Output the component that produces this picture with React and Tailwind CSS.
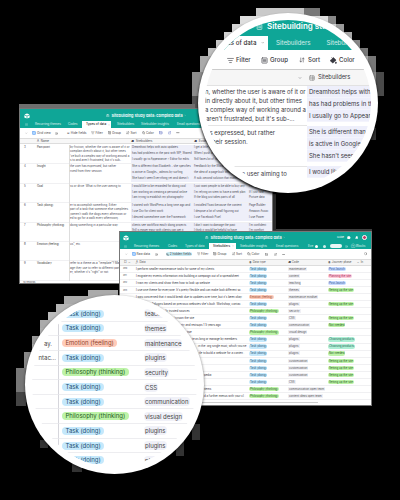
import React from "react";
import {
  ArrowDownUp, Bell, ChevronDown, ClipboardList, ExternalLink, EyeOff, Grid2x2, HelpCircle,
  ListFilter, Menu, MoreHorizontal, PaintBucket, Rows3, Search, SquareMenu, TableProperties,
} from "lucide-react";

const HALO_TOP = [
  [256, 8, 48, 8, "#c9c9c9"], [304, 8, 16, 8, "#777"],
  [240, 16, 88, 8, "#dedede"], [328, 16, 8, 8, "#888"],
  [232, 24, 104, 8, "#d4d4d4"], [336, 24, 8, 8, "#999"],
  [224, 32, 120, 8, "#d0d0d0"], [344, 32, 8, 8, "#aaa"],
  [216, 40, 136, 8, "#c5c5c5"], [352, 40, 8, 8, "#888"],
  [208, 48, 152, 8, "#bebebe"], [360, 48, 8, 8, "#777"],
  [200, 56, 168, 16, "#aaa"], [368, 56, 8, 16, "#777"],
  [192, 72, 184, 24, "#8c8c8c"], [376, 72, 8, 24, "#4a4a4a"],
  [192, 96, 184, 13, "#555"], [360, 128, 16, 12, "#333"], [352, 152, 8, 8, "#303030"],
  [19, 104, 176, 4, "#6e6e6e"], [272, 229, 100, 3, "#3c3c3c"], [273, 194, 3, 36, "#2a2a2a"],
];
const HALO_BOTTOM = [
  [88, 290, 30, 10, "#aaa"], [64, 296, 64, 8, "#aaa"], [56, 304, 70, 8, "#b5b5b5"],
  [48, 312, 60, 8, "#bbb"], [40, 320, 40, 8, "#aaa"], [40, 328, 30, 8, "#b0b0b0"],
  [32, 336, 30, 8, "#999"], [32, 344, 20, 8, "#aaa"], [24, 352, 20, 16, "#888"],
  [16, 368, 16, 24, "#777"], [16, 392, 10, 14, "#444"], [40, 440, 8, 8, "#333"],
  [72, 464, 10, 8, "#333"], [192, 424, 8, 16, "#333"], [176, 440, 8, 16, "#333"],
];

function Halo({ blocks }) {
  return (
    <svg className="absolute inset-0" width="400" height="500" shapeRendering="crispEdges" aria-hidden="true">
      {blocks.map(([x, y, w, h, fill], i) => <rect key={i} x={x} y={y} width={w} height={h} fill={fill} />)}
    </svg>
  );
}

function Logo() {
  return (
    <svg className="size-[6px]" viewBox="0 0 12 12" fill="#fff">
      <path d="M1 3.2 6 1l5 2.2L6 5.4zM.7 4.4l4.6 2v4.4L.7 8.8zM6.7 6.4l4.6-2v4.4l-4.6 2z" />
    </svg>
  );
}

function Pill({ children, tone }) {
  const tones = {
    blue: "bg-[#c5e8fb] text-[#1c4f70]",
    green: "bg-[#bdf3a8] text-[#245a20]",
    red: "bg-[#ffcbb9] text-[#8f4630]",
    pink: "bg-[#ffc9d8] text-[#9b2450]",
    indigo: "bg-[#c8dcff] text-[#28508f]",
    teal: "bg-[#aeeed5] text-[#1d6552]",
  };
  return <span className={"rounded-full " + tones[tone]}>{children}</span>;
}

const typeTone = (t) => (t[0] === "T" ? "blue" : t[0] === "E" ? "red" : "green");

/* ---------- "Types of data" window ---------- */

const typeRows = [
  [3, "Pain point", ["by friction, whether the user is aware of it or", "complain directly about it, but other times", "'ve built a complex way of working around a", "s to and aren't frustrated, but it's sub-..."],
    ["Dreamhost helps with auto updates", "has had problems in the past with WP, Shared", "I usually go to Appearance > Editor for edits"],
    ["I get a little nervous when I update", "When I push an update it will break", "Still faces lot of issues and themes"], ["She wants", "I would", "It would"]],
  [4, "Insight", ["the user has expressed, but rather", "rived from their session."],
    ["She is different than Elizabeth - she specifies", "is active in Google+, admins by surfing", "She hasn't seen Everything yet and doesn't"],
    ["Feedback by the WordPress repo", "the idea of a page built with blocks", "A sub-second solution that makes"], ["She used", "I have", "People"]],
  [5, "Goal", ["ss or drive. What is the user aiming to"],
    ["I would like to be rewarded for doing cool", "I am working on creating a personal online", "I am trying to establish my photography"],
    ["I just want people to be able to buy any", "I'm relying on stem to have a week plan", "If the blog just takes parts of all"], ["Pay", "If I just had", "Picture data"]],
  [6, "Task (doing)", ["er to accomplish something. Either", "part of a task that someone else completes.", "(weren't walk the dogs every afternoon or", "ed to go for a walk every afternoon)."],
    ["I started with WordPress a long time ago and", "I use Divi for client work", "I desired somewhere over the Framework"],
    ["I installed Yoast because the content", "I despise a lot of small figuring out", "I use Facebook Pixel"], ["Page Builder", "Amazon Assoc", "I use Power"]],
  [7, "Philosophy (thinking)", ["doing something in a particular way."],
    ["clients see workflow easily doing projects", "Still is easier easy with clients can get it"],
    ["I don't want to damage the past", "I think it would be helpful to have"], ["I'm confident", "I'm comfort"]],
  [8, "Emotion (feeling)", ["us\", etc."], [], [], []],
  [9, "Vocabulary", ["refer to a theme as a \"template\"? Make", "age they use to refer to different particu-", "er, whether it's \"right\" or not."], [], [], []],
];

function MiniLines({ lines }) {
  return (
    <div className="flex h-[18px] min-w-0 flex-col overflow-hidden bg-[#eeeff9] pl-px">
      {lines.map((l) => <div key={l} className="h-[5.8px] whitespace-nowrap leading-[5.8px]">{l}</div>)}
    </div>
  );
}

function TypesWindow() {
  return (
    <section className="absolute left-[20px] top-[109px] flex h-[174px] w-[252px] flex-col overflow-hidden bg-white text-[2.75px] text-[#4b4b55] shadow-[0_0_0_1px_#777]">
      <header className="h-[19px] bg-[#0fa697] text-white">
        <div className="flex h-[12px] items-center whitespace-nowrap pl-[4px] pt-px">
          <Logo />
          <ClipboardList className="ml-[76px] size-[3.5px]" />
          <b className="ml-[2px] text-[3.85px] font-semibold">Sitebuilding study data: compiled data</b>
          <ChevronDown className="ml-px size-[2.5px]" />
        </div>
        <div className="flex h-[7px] items-center whitespace-nowrap text-[3.1px] text-white/80">
          <Menu className="ml-[5px] size-[3px] shrink-0" />
          <span className="ml-[7px] w-[33px] shrink-0">Recurring themes</span>
          <span className="w-[14px] shrink-0">Codes</span>
          <span className="flex h-full w-[29px] shrink-0 items-center gap-[2px] bg-white pl-[4px] font-medium text-[#222]">Types of data <ChevronDown className="size-[2px] shrink-0" /></span>
          <span className="ml-[6px] w-[24px] shrink-0">Sitebuilders</span>
          <span className="w-[36px] shrink-0">Sitebuilder insights</span>
          <span>Email questions</span>
        </div>
      </header>
      <div className="flex h-[10px] shrink-0 items-center whitespace-nowrap text-[3.1px] text-[#444]">
        <ChevronDown className="ml-[5px] size-[2.5px]" />
        <Grid2x2 className="ml-[4px] size-[4px] fill-[#aad4ff] text-[#2f80ed]" />
        <span className="ml-[1.5px] w-[18px]">Grid view</span><HelpCircle className="size-[3px]" />
        <span className="ml-[9px] w-[24px]">⊝ Hide fields</span>
        <ListFilter className="size-[3.5px]" /><span className="ml-px w-[12px]">Filter</span>
        <SquareMenu className="size-[3.5px]" /><span className="ml-px w-[14px]">Group</span>
        <ArrowDownUp className="size-[3.5px]" /><span className="ml-px w-[11px]">Sort</span>
        <PaintBucket className="size-[3.5px]" /><span className="ml-px w-[13px]">Color</span>
        <Rows3 className="size-[3.5px] text-[#4052b5]" /><ExternalLink className="ml-[5px] size-[3.5px] text-[#4052b5]" /><MoreHorizontal className="ml-[5px] size-[3.5px]" />
      </div>
      <div className="flex h-[6px] shrink-0 items-center whitespace-nowrap border-y-[0.5px] border-[#ddd] bg-[#f7f7f7] text-[3px]">
        <span className="ml-[17px] w-[94px]">A &nbsp;Name</span>
        <span className="w-[63px]">≔ &nbsp;Sitebuilders</span><span>≔ &nbsp;Evidence</span>
      </div>
      <div className="flex-1 pt-px">
        {typeRows.map(([n, name, desc, a, b, c]) => (
          <div key={n} className="grid h-[19.4px] grid-cols-[17px_32px_62px_62px_55px_24px] border-b border-[#f0f0f2]">
            <span className="pl-[4px] leading-[4.5px]">{n}</span>
            <span className="whitespace-nowrap leading-[4.5px] text-[#333]">{name}</span>
            <div className="h-[19.4px] border-l border-[#ddd] leading-[4.3px]">
              {desc.map((d) => <div key={d} className="whitespace-nowrap text-[2.85px]">{d}</div>)}
            </div>
            {a.length > 0 && <><MiniLines lines={a} /><MiniLines lines={b} /><MiniLines lines={c} /></>}
          </div>
        ))}
      </div>
      <footer className="h-[4px] pl-[3px] text-[2.5px] leading-[3px]">10 records<div className="ml-[16px] h-px w-[80px] bg-[#ccc]" /></footer>
    </section>
  );
}

/* ---------- "Sitebuilders" window ---------- */

const T = "Task (doing)", P = "Philosophy (thinking)", E = "Emotion (feeling)";
const SET = ["Setting up the site", "green"], POST = ["Post-launch", "indigo"];
const records = [
  [0, "I perform smaller maintenance tasks for some of my clients", T, "maintenance", POST],
  [0, "I migrate my events information into building a campaign out of a spreadsheet", T, "content", ["Planning the site", "pink"]],
  [0, "I train my clients and show them how to look up website", T, "teaching", POST],
  [0, "I use one theme for everyone. It's pretty flexible and can make look different so...", T, "themes", SET],
  [0, "I was concerned that it would break due to updates over time, but it's been okay.", E, "maintenance  mindset", null],
  [16, "*plugins based on previous websites she's built. Workshop, contac...", T, "plugins", SET],
  [29, "'ly trusted sources", P, "security", null],
  [38, "'rvision the site.", T, "CSS", SET],
  [45, "rty and restsups 1.5 years ago", T, "communication", ["Not needed", "green"]],
  [51, "tise", P, "visual design", null],
  [56, "te as long or manage by members", T, "plugins", ["Choosing products", "teal"]],
  [62, "in the .org single must, which you ne...", T, "plugins", ["Choosing products", "teal"]],
  [63, "tle to build a website for a conten...", T, "plugins", ["Not needed", "green"]],
  [64, "", T, "customization", SET],
  [65, "", T, "customization", SET],
  [68, "pedia", T, "customization", SET],
  [68, "", T, "CSS", SET],
  [68, "items", P, "communication  open team", null],
  [68, "d a further menus with your cl...", P, "content  ideas  open team", null],
];

function SitebuildersWindow() {
  return (
    <section className="absolute left-[120px] top-[232px] flex h-[173px] w-[251px] flex-col overflow-hidden bg-white text-[2.8px] text-[#33333c] shadow-[0_0_0_1px_#777]">
      <header className="h-[17px] shrink-0 bg-[#0fa697] text-white">
        <div className="flex h-[11px] items-center whitespace-nowrap pl-[3px]">
          <Logo />
          <ClipboardList className="ml-[76px] size-[3.5px]" />
          <b className="ml-[2px] text-[3.85px] font-semibold">Sitebuilding study data: compiled data</b>
          <ChevronDown className="ml-px size-[2.5px]" />
          <span className="ml-auto text-[2.5px]">Guide</span>
          <HelpCircle className="ml-[3px] size-[3.5px] fill-white text-white" />
          <Bell className="ml-[4px] size-[3.5px] fill-white" />
          <i className="ml-[4px] mr-[4px] size-[5px] rounded-full border border-white bg-[#bd3f67]" />
        </div>
        <div className="flex h-[6px] items-center whitespace-nowrap text-[3px] text-white/80">
          <Menu className="ml-[4px] size-[3px] shrink-0" />
          <span className="ml-[7px] w-[34px] shrink-0">Recurring themes</span><span className="w-[17px] shrink-0">Codes</span><span className="w-[24px] shrink-0">Types of data</span>
          <span className="flex h-full w-[27px] shrink-0 items-center gap-[2px] bg-white pl-[4px] font-medium text-[#222]">Sitebuilders <ChevronDown className="size-[2px]" /></span>
          <span className="ml-[4px] w-[36px] shrink-0">Sitebuilder insights</span><span className="w-[32px] shrink-0">Email questions</span>
          <span className="w-[7px] shrink-0">Eve</span><i className="mr-[5px] size-[3px] shrink-0 rounded-full bg-white" /><i className="mr-[4px] size-[3px] shrink-0 rounded-full bg-white/80" />
          <i className="mr-[3px] h-[3.5px] w-[12px] shrink-0 rounded-full bg-white/90" /><HelpCircle className="mr-[3px] size-[3px] shrink-0" /><span>⊕ Blocks</span>
        </div>
      </header>
      <div className="flex h-[10px] shrink-0 items-center whitespace-nowrap text-[3.1px] text-[#444]">
        <ChevronDown className="ml-[5px] size-[2.5px]" />
        <Grid2x2 className="ml-[4px] size-[4px] fill-[#aad4ff] text-[#2f80ed]" />
        <span className="ml-[1px] w-[18px]">Raw data</span><HelpCircle className="size-[3px]" />
        <span className="ml-[8px] mr-[5px] flex h-[4.5px] w-[26px] items-center justify-center gap-px rounded-full bg-[#c8ebf4]"><EyeOff className="size-[3px]" />2 hidden fields</span>
        <ListFilter className="size-[3.5px]" /><span className="ml-px w-[12px]">Filter</span>
        <SquareMenu className="size-[3.5px]" /><span className="ml-px w-[14px]">Group</span>
        <ArrowDownUp className="size-[3.5px]" /><span className="ml-px w-[11px]">Sort</span>
        <PaintBucket className="size-[3.5px]" /><span className="ml-px w-[13px]">Color</span>
        <Rows3 className="size-[3px]" /><ExternalLink className="ml-[6px] size-[3px]" /><MoreHorizontal className="ml-[5px] size-[3px]" />
        <Search className="ml-auto mr-[4px] size-[3.5px]" />
      </div>
      <div className="grid h-[7px] shrink-0 grid-cols-[16px_113px_39px_40px_43px] items-center whitespace-nowrap border-y-[0.5px] border-[#ddd] bg-[#f5f5f5] text-[#555]">
        <span className="pl-[4px]">▢ &nbsp;⌄</span><span>A͟ &nbsp;Data</span><span>◉ Data type</span><span>≔ Code</span><span>◉ Journey phase &nbsp; &nbsp; &nbsp; ⌄ &nbsp;In</span>
      </div>
      <div className="flex-1 overflow-hidden">
        {records.map(([inset, text, type, code, phase], i) => (
          <div key={i} className="grid h-[7.05px] grid-cols-[16px_110px_39px_40px_46px] items-center whitespace-nowrap border-b-[0.5px] border-[#f0f0f2]">
            <span className="pl-[3px] text-[2.2px]">{inset === 0 ? 290 + i : ""}</span>
            <span style={{ paddingLeft: inset }}>{text}</span>
            <span className="flex pl-[3px]"><Pill tone={typeTone(type)}><span className="px-[1px]">{type}</span></Pill></span>
            <span className="pl-[3px]"><span className="bg-[#f0f0f5] px-px text-[#555]">{code}</span></span>
            <span className="flex pl-[3px]">{phase && <Pill tone={phase[1]}><span className="px-px">{phase[0]}</span></Pill>}</span>
          </div>
        ))}
      </div>
      <div className="mb-[2px] ml-[80px] h-px w-[118px] bg-[#ccc]" />
    </section>
  );
}

/* ---------- Magnified circles ---------- */

function TopCircle() {
  const line = "h-[9px] whitespace-nowrap leading-[9px]";
  const side = "flex h-[12px] items-center whitespace-nowrap border-b border-[#f4f4fc] bg-[#eeeffb] pl-[2px]";
  return (
    <section className="absolute left-[198px] top-[13px] size-[180px] rounded-full bg-white p-[7px] shadow-[0_2px_3px_#000]">
      <div className="size-[166px] overflow-hidden rounded-full text-[6px] text-[#383840]">
        <header className="h-[30px] bg-[#0fa697] text-white">
          <div className="flex h-[16px] items-center whitespace-nowrap pb-[4px] pl-[51px]">
            <ClipboardList className="size-[7px] shrink-0" />
            <b className="ml-[4px] text-[8px] font-semibold">Sitebuilding study data</b>
          </div>
          <div className="flex h-[14px] items-center whitespace-nowrap text-[6.2px] text-white/80">
            <span className="flex h-full w-[63px] shrink-0 items-center justify-end gap-[4px] bg-white pr-[4px] font-medium text-[#333]">Types of data <ChevronDown className="size-[3.5px] shrink-0" /></span>
            <span className="ml-[8px]">Sitebuilders</span><span className="ml-[16px]">Sitebuilder insights</span>
          </div>
        </header>
        <div className="flex h-[20px] items-center border-b border-[#ccc] pt-px text-[6.1px] font-medium">
          <ListFilter className="ml-[22px] size-[7px]" /><span className="ml-[2px] w-[25px]">Filter</span>
          <SquareMenu className="size-[7px]" /><span className="ml-[2px] w-[29px]">Group</span>
          <ArrowDownUp className="size-[6px]" /><span className="ml-[3px] w-[22px]">Sort</span>
          <PaintBucket className="size-[7px] fill-[#383840]" /><span className="ml-[2px]">Color</span>
        </div>
        <div className="flex h-[16px] items-center border-b border-[#e2e2e2] bg-[#f6f6f6]">
          <ChevronDown className="ml-[93px] size-[4px]" />
          <TableProperties className="ml-[7px] size-[6px] text-[#777]" /><span className="ml-[3px] text-[5.8px]">Sitebuilders</span>
        </div>
        <div className="flex">
          <div className="w-[102px] shrink-0 pt-[1px]">
            <div className={line}>n, whether the user is aware of it or</div>
            <div className={line}>in directly about it, but other times</div>
            <div className={line}>a complex way of working around a</div>
            <div className={line + " pl-[1px]"}>aren't frustrated, but it's sub-...</div>
            <div className="mt-[2px] h-[41px] border-t border-[#e4e4e4] pt-[2px]">
              <div className={line + " pl-[3px]"}>is expressed, but rather</div>
              <div className={line + " pl-[5px]"}>their session.</div>
            </div>
            <div className="border-t border-[#e4e4e4] pt-[2px]"><div className={line + " pl-[31px]"}>the user aiming to</div></div>
          </div>
          <div className="flex-1">
            <div className={side}>Dreamhost helps with</div><div className={side}>has had problems in th</div><div className={side}>I usually go to Appear</div>
            <div className="mt-[4px]"><div className={side}>She is different than</div><div className={side}>is active in Google</div><div className={side}>She hasn't seen</div></div>
            <div className="mt-[4px]"><div className={side}>I would like</div></div>
          </div>
        </div>
      </div>
    </section>
  );
}

const zoomRows = [[T, "teaching"], [T, "themes"], [E, "maintenance"], [T, "plugins"], [P, "security"], [T, "CSS"], [T, "communication"], [P, "visual design"], [T, "plugins"], [T, "plugins"], [T, "plugins"]];

function BottomCircle() {
  return (
    <section className="absolute left-[25px] top-[295px] size-[179px] rounded-full bg-white p-[7px] shadow-[0_1px_3px_#0009]">
      <div className="size-[165px] overflow-hidden rounded-full pt-[5px] text-[6px] text-[#444]">
        {zoomRows.map(([type, code], i) => (
          <div key={i} className="grid h-[14.65px] grid-cols-[27px_1fr] whitespace-nowrap">
            <span className="flex items-center justify-end border-b border-r border-b-[#ededf0] border-r-[#d6d6dc] pr-[2px]">{i === 2 ? <span className="pr-[4px]">ay.</span> : i === 3 ? "ntac..." : ""}</span>
            <span className="grid grid-cols-[85px_1fr] items-center border-b border-[#ededf0]">
              <span className="flex pl-[3px]"><Pill tone={typeTone(type)}><span className="block h-[8px] px-[3.5px] leading-[8px]">{type}</span></Pill></span>
              <span><span className="rounded-sm bg-[#f0f1f8] px-[1px] py-[1px]">{code}</span></span>
            </span>
          </div>
        ))}
      </div>
    </section>
  );
}

export default function App() {
  return (
    <main className="relative h-[500px] w-[400px] overflow-hidden bg-black font-['Inter','Liberation_Sans',sans-serif]">
      <Halo blocks={HALO_TOP} />
      <Halo blocks={HALO_BOTTOM} />
      <TypesWindow />
      <TopCircle />
      <SitebuildersWindow />
      <BottomCircle />
    </main>
  );
}
